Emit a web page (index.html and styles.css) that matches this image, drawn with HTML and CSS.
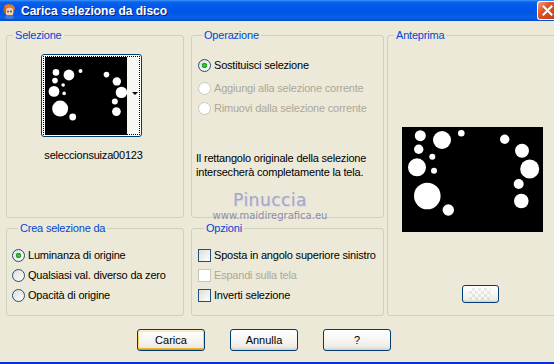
FILE: index.html
```html
<!DOCTYPE html>
<html lang="it">
<head>
    <meta charset="UTF-8">
    <title>Carica selezione da disco</title>
    <link rel="stylesheet" href="styles.css">
</head>
<body>
    <svg class="defs" width="0" height="0">
        <defs>
            <g id="dots" fill="#fff">
                <circle cx="18.3" cy="8.7" r="5.5"/>
                <circle cx="40" cy="13" r="9"/>
                <circle cx="59.3" cy="6.3" r="3.3"/>
                <circle cx="102.7" cy="12.3" r="4.7"/>
                <circle cx="16.7" cy="22.3" r="4.7"/>
                <circle cx="30.3" cy="29.7" r="3"/>
                <circle cx="15" cy="40.3" r="9"/>
                <circle cx="32" cy="43.7" r="3"/>
                <circle cx="25.3" cy="69" r="13.3"/>
                <circle cx="46.3" cy="83" r="5.7"/>
                <circle cx="120" cy="23.7" r="7"/>
                <circle cx="127.7" cy="42" r="9.5"/>
                <circle cx="116.7" cy="57" r="5"/>
                <circle cx="119.3" cy="74" r="7.3"/>
            </g>
        </defs>
    </svg>

    <div class="window">
        <div class="titlebar">
            <svg class="app-icon" width="15" height="16" viewBox="0 0 15 16">
                <path d="M2 3 L6 1 L11 2 L13 5 L12 8 L9 7 L4 8 Z" fill="#e8772a"/>
                <ellipse cx="7.5" cy="9" rx="4" ry="4.2" fill="#f6d3a8"/>
                <circle cx="6" cy="8.5" r="0.9" fill="#2a3f8f"/>
                <circle cx="9" cy="8.5" r="0.9" fill="#2a3f8f"/>
                <path d="M3 13 L5 12 L10 12 L12 14 L11 16 L4 16 Z" fill="#3a7bd5"/>
                <path d="M1 6 L3 4 L4 9 L2 10 Z" fill="#c85a1c"/>
            </svg>
            <span class="title">Carica selezione da disco</span>
            <span class="close">
                <svg width="11" height="11" viewBox="0 0 11 11">
                    <path d="M1.5 1.5 L9.5 9.5 M9.5 1.5 L1.5 9.5" stroke="#fff" stroke-width="2" stroke-linecap="square"/>
                </svg>
            </span>
        </div>

        <div class="client">
            <div class="groups">
                <fieldset class="group g-sel">
                    <legend>Selezione</legend>
                    <div class="thumb-btn">
                        <div class="thumb-focus">
                            <svg class="thumb-img" width="82" height="78" viewBox="0 -17 137 130" preserveAspectRatio="none">
                                <rect x="0" y="-17" width="137" height="130" fill="#000"/>
                                <use href="#dots"/>
                            </svg>
                            <div class="thumb-strip"><span class="arrow"></span></div>
                        </div>
                    </div>
                    <div class="thumb-name">seleccionsuiza00123</div>
                </fieldset>

                <fieldset class="group g-op">
                    <legend>Operazione</legend>
                    <div class="opt-list op-list">
                        <label class="opt"><input type="radio" name="op" checked> Sostituisci selezione</label>
                        <label class="opt off"><input type="radio" name="op" disabled> Aggiungi alla selezione corrente</label>
                        <label class="opt off"><input type="radio" name="op" disabled> Rimuovi dalla selezione corrente</label>
                    </div>
                    <p class="info">Il rettangolo originale della selezione intersecherà completamente la tela.</p>
                </fieldset>

                <fieldset class="group g-prev">
                    <legend>Anteprima</legend>
                    <svg class="preview" width="141" height="105" viewBox="0 0 141 105">
                        <rect width="141" height="105" fill="#000"/>
                        <use href="#dots"/>
                    </svg>
                    <button class="btn btn-mini"><span class="checker"></span></button>
                </fieldset>

                <fieldset class="group g-src">
                    <legend>Crea selezione da</legend>
                    <div class="opt-list">
                        <label class="opt"><input type="radio" name="src" checked> Luminanza di origine</label>
                        <label class="opt"><input type="radio" name="src"> Qualsiasi val. diverso da zero</label>
                        <label class="opt"><input type="radio" name="src"> Opacità di origine</label>
                    </div>
                </fieldset>

                <fieldset class="group g-opt">
                    <legend>Opzioni</legend>
                    <div class="opt-list">
                        <label class="opt"><input type="checkbox"> Sposta in angolo superiore sinistro</label>
                        <label class="opt off"><input type="checkbox" disabled> Espandi sulla tela</label>
                        <label class="opt"><input type="checkbox"> Inverti selezione</label>
                    </div>
                </fieldset>
            </div>

            <div class="buttons">
                <button class="btn btn-default">Carica</button>
                <button class="btn">Annulla</button>
                <button class="btn">?</button>
            </div>

            <div class="watermark">
                <div class="wm-name">Pinuccia</div>
                <div class="wm-url">www.maidiregrafica.eu</div>
            </div>
        </div>
    </div>
</body>
</html>
```

FILE: styles.css
```css
body {
    margin: 0;
    font-family: "Liberation Sans", Arial, sans-serif;
    font-size: 11px;
    letter-spacing: -0.2px;
    color: #000;
    background: #ece9d8;
}
.defs {
    position: absolute;
}
.window {
    width: 554px;
    height: 364px;
    display: flex;
    flex-direction: column;
    overflow: hidden;
}
.titlebar {
    height: 21px;
    display: flex;
    align-items: center;
    background: linear-gradient(to bottom, #3d95ff 0, #0a62e8 10%, #0058ee 30%, #0055e5 60%, #0a5fea 85%, #0049d0 100%);
    color: #fff;
    flex-shrink: 0;
    letter-spacing: 0;
}
.app-icon {
    margin-left: 2px;
    margin-right: 4px;
}
.title {
    font-weight: bold;
    font-size: 12px;
    text-shadow: 1px 1px #0a1f6e;
    flex: 1;
}
.close {
    width: 17px;
    height: 19px;
    display: flex;
    align-items: center;
    justify-content: center;
    border: 1px solid #fff;
    border-right: none;
    border-radius: 3px 0 0 3px;
    background: linear-gradient(135deg, #f0a080 0, #e0552a 40%, #c83c14 100%);
    padding-left: 2px;
    box-sizing: border-box;
}
.client {
    flex: 1;
    position: relative;
    padding: 8px 0 0 6px;
    border-bottom: 2px solid #0831d9;
}
.groups {
    display: grid;
    grid-template-columns: 178px 193px 166px;
    grid-template-rows: 189px 94px;
    grid-template-areas:
        "sel op prev"
        "src opt prev";
    column-gap: 7px;
    row-gap: 4px;
}
.group {
    margin: 0;
    padding: 0;
    min-width: 0;
    border: 1px solid #d0d0bf;
    border-radius: 3px;
    box-sizing: border-box;
}
.group legend {
    color: #0046d5;
    line-height: 12px;
    padding: 0 2px;
    margin-left: 6px;
}
.g-sel { grid-area: sel; }
.g-op { grid-area: op; }
.g-prev { grid-area: prev; margin-left: -4px; }
.g-src { grid-area: src; }
.g-opt { grid-area: opt; }

/* selezione */
.g-sel {
    display: flex;
    flex-direction: column;
    align-items: center;
    padding: 13px 7px 0 0;
}
.thumb-btn {
    width: 101px;
    height: 83px;
    box-sizing: border-box;
    border: 1px solid #003c74;
    border-radius: 3px;
    background: #fff;
    padding: 1px;
}
.thumb-focus {
    display: flex;
    height: 100%;
    box-sizing: border-box;
    border: 1px dotted #000;
    padding: 0 0 0 1px;
}
.thumb-img {
    display: block;
}
.thumb-strip {
    flex: 1;
    position: relative;
    background: #f7f7f4;
}
.arrow {
    position: absolute;
    right: 1px;
    top: 35px;
    border-left: 3px solid transparent;
    border-right: 3px solid transparent;
    border-top: 3px solid #000;
}
.thumb-name {
    margin-top: 11px;
    margin-left: 4px;
    line-height: 14px;
}

/* radio / checkbox */
.opt-list {
    display: flex;
    flex-direction: column;
}
.opt {
    display: flex;
    align-items: center;
    height: 20px;
    gap: 3px;
}
.opt.off {
    color: #aca899;
}
.opt input {
    appearance: none;
    -webkit-appearance: none;
    margin: 0;
    width: 13px;
    height: 13px;
    flex-shrink: 0;
    border: 1px solid #1c5180;
    background: linear-gradient(135deg, #dcdcd7, #fff);
    box-sizing: border-box;
}
.opt input[type="radio"] {
    border-radius: 50%;
}
.opt input[type="radio"]:checked {
    background: radial-gradient(circle, #55d551 0, #21a121 2px, #21a121 2.5px, transparent 3px), linear-gradient(135deg, #dcdcd7, #fff);
}
.opt input:disabled {
    border-color: #cac8bb;
    background: #fff;
}

.g-op {
    padding: 14px 4px 0 4px;
}
.g-op .opt {
    padding-left: 2px;
}
.op-list .opt:first-child {
    margin-bottom: 3px;
}
.info {
    margin: 33px 0 0 0;
    line-height: 14px;
}
.g-src {
    padding: 11px 0 0 5px;
}
.g-opt {
    padding: 11px 0 0 6px;
}

/* buttons */
.buttons {
    display: flex;
    gap: 25px;
    padding-left: 131px;
    margin-top: 13px;
}
.btn {
    font-family: inherit;
    font-size: 11px;
    width: 68px;
    height: 22px;
    border: 1px solid #003c74;
    border-radius: 3px;
    background: linear-gradient(to bottom, #fff 0, #f4f3ee 60%, #ecebe6 85%, #d6d0c5 100%);
    color: #000;
}
.btn-default {
    box-shadow: inset 0 1px #fff0cf, inset 1px 0 #f9d26e, inset -1px 0 #f9d26e, inset 0 -1px #e5970e, inset 0 2px #fce5a7, inset 0 -2px #f8b330;
}

/* anteprima */
.g-prev {
    display: flex;
    flex-direction: column;
    align-items: center;
}
.preview {
    display: block;
    margin-top: 86px;
}
.g-prev .btn-mini {
    margin-top: 53px;
    margin-left: 16px;
    width: 37px;
    height: 18px;
    padding: 0;
    display: flex;
    align-items: center;
    justify-content: center;
}
.checker {
    width: 22px;
    height: 12px;
    opacity: 0.35;
    background: repeating-conic-gradient(#c8c8c8 0 25%, #fff 0 50%) 0 0 / 6px 6px;
}

/* filigrana */
.watermark {
    position: absolute;
    left: 208px;
    top: 169px;
    text-align: center;
    width: 124px;
    pointer-events: none;
    letter-spacing: 0;
}
.wm-name {
    font-family: "DejaVu Sans", sans-serif;
    font-size: 17px;
    color: #a6a6c4;
    letter-spacing: 0.5px;
    line-height: 20px;
    text-shadow: 1px 1px #d8d8e6;
}
.wm-url {
    font-family: "DejaVu Sans", sans-serif;
    font-size: 10px;
    color: #8d8dac;
    line-height: 12px;
}
```
